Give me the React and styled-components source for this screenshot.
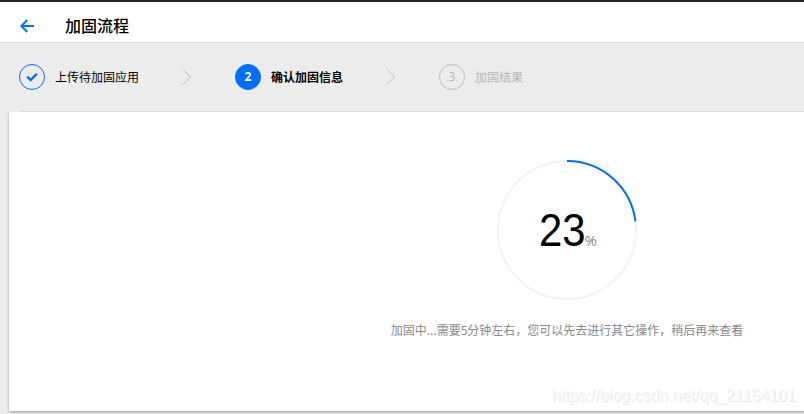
import React from "react";
import styled, { createGlobalStyle } from "styled-components";

const GlobalStyle = createGlobalStyle`
  * { box-sizing: border-box; }
  body {
    margin: 0;
    overflow: hidden;
    background: #ececec;
    font-family: "Noto Sans CJK SC", sans-serif;
    font-size: 12px;
    color: #000;
  }
`;

const Page = styled.div`
  display: flex;
  flex-direction: column;
  height: 414px;
  overflow: hidden;
  position: relative;
`;

const Header = styled.header`
  display: flex;
  align-items: center;
  height: 43px;
  flex: none;
  padding: 5px 0 0 20px;
  gap: 31px;
  background: #fff;
  border-top: 2px solid #232122;
  border-bottom: 1px solid #dadada;
`;

const BackIcon = styled.svg`
  width: 14px;
  height: 14px;
  display: block;
  margin-top: 2px;
`;

const Title = styled.h1`
  margin: 0;
  font-size: 16px;
  line-height: 24px;
  font-weight: 500;
`;

const Steps = styled.nav`
  display: flex;
  align-items: center;
  height: 69px;
  flex: none;
  margin-left: 19px;
  border-bottom: 1px solid #d9d9d9;
`;

const Step = styled.div`
  display: flex;
  align-items: center;
  gap: 10px;
  line-height: 18px;
  color: ${(p) => (p.$state === "pending" ? "#b5b5b5" : "#000")};
  font-weight: ${(p) => (p.$state === "active" ? 700 : 400)};
`;

const Badge = styled.span`
  display: flex;
  align-items: center;
  justify-content: center;
  width: 26px;
  height: 26px;
  border-radius: 50%;
  font-family: "Open Sans", sans-serif;
  border: 1px solid ${(p) => (p.$state === "pending" ? "#bdbdbd" : "#006eff")};
  background: ${(p) => (p.$state === "active" ? "#006eff" : "transparent")};
  color: ${(p) => (p.$state === "active" ? "#fff" : "#b5b5b5")};
`;

const Chevron = styled.svg`
  display: block;
  width: 10px;
  height: 18px;
  margin: 0 43px;
`;

const Card = styled.main`
  display: flex;
  flex-direction: column;
  align-items: center;
  flex: none;
  width: 1116px;
  height: 299px;
  margin-left: 9px;
  padding-top: 48px;
  background: #fff;
  box-shadow: 0 1px 3px rgba(0, 0, 0, 0.35);
  clip-path: inset(0 0 -6px -6px);
`;

const Gauge = styled.div`
  display: grid;
  place-items: center;
  width: 140px;
  height: 140px;
  > * { grid-area: 1 / 1; }
`;

const Ring = styled.svg`
  display: block;
  width: 140px;
  height: 140px;
`;

const Reading = styled.div`
  display: flex;
  align-items: baseline;
  justify-content: center;
  line-height: 60px;
  padding: 10px 0 0 3px;
`;

const Digits = styled.span`
  width: 46px;
  font-family: "Liberation Sans", Arial, sans-serif;
  font-size: 47px;
  white-space: nowrap;
  transform: scaleX(0.89);
  transform-origin: left;
`;

const Percent = styled.span`
  width: 14px;
  font-family: "Open Sans", sans-serif;
  font-size: 15px;
  color: #888;
`;

const Message = styled.p`
  margin: 20px 0 0;
  line-height: 20px;
  color: #888;
  white-space: nowrap;
`;

const Watermark = styled.div`
  position: absolute;
  right: 8px;
  bottom: 8px;
  font-family: "Liberation Sans", Arial, sans-serif;
  font-size: 16px;
  line-height: 20px;
  color: #f8f8f8;
  text-shadow: 1px 1px 0 #e9e9e9;
`;

const Arrow = () => (
  <Chevron viewBox="0 0 10 18" fill="none" stroke="#bcbcbc">
    <path d="M1 1.5 8.5 9 1 16.5" />
  </Chevron>
);

const PERCENT = 23;

export default function App() {
  return (
    <>
      <GlobalStyle />
      <Page>
        <Header>
          <BackIcon viewBox="0 0 14 14" fill="none" stroke="#006eff" strokeWidth="2">
            <path d="M7.2 1 1.4 7l5.8 6M1.4 7H14" />
          </BackIcon>
          <Title>加固流程</Title>
        </Header>
        <Steps>
          <Step $state="done">
            <Badge $state="done">
              <svg width="12" height="10" viewBox="0 0 12 10" fill="none" stroke="#006eff" strokeWidth="2.4">
                <path d="M1.2 4.6 4.6 8 10.8 1.8" />
              </svg>
            </Badge>
            上传待加固应用
          </Step>
          <Arrow />
          <Step $state="active">
            <Badge $state="active">2</Badge>
            确认加固信息
          </Step>
          <Arrow />
          <Step $state="pending">
            <Badge $state="pending">3</Badge>
            加固结果
          </Step>
        </Steps>
        <Card>
          <Gauge>
            <Ring viewBox="0 0 140 140" fill="none" strokeWidth="2">
              <circle cx="70" cy="70" r="69" stroke="#f2f2f2" />
              <circle
                cx="70"
                cy="70"
                r="69"
                stroke="#006eff"
                pathLength="100"
                strokeDasharray={`${PERCENT} 100`}
                transform="rotate(-90 70 70)"
              />
            </Ring>
            <Reading>
              <Digits>{PERCENT}</Digits>
              <Percent>%</Percent>
            </Reading>
          </Gauge>
          <Message>加固中...需要5分钟左右，您可以先去进行其它操作，稍后再来查看</Message>
        </Card>
        <Watermark>https://blog.csdn.net/qq_21154101</Watermark>
      </Page>
    </>
  );
}
